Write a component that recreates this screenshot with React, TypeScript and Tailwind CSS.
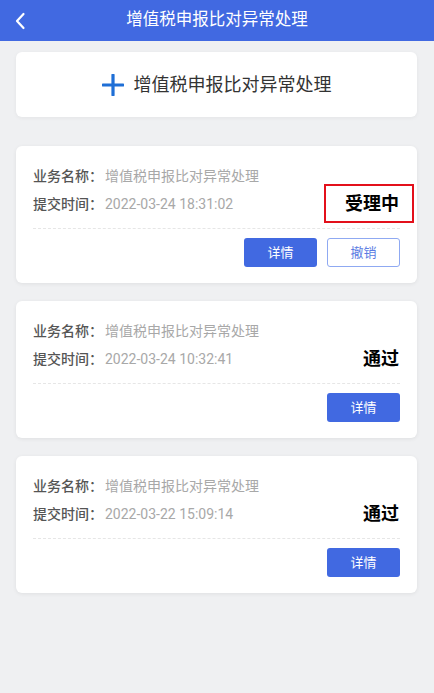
import React from "react";

type Item = { time: string; status: string; cancel?: boolean; marked?: boolean };

const items: Item[] = [
  { time: "2022-03-24 18:31:02", status: "受理中", cancel: true, marked: true },
  { time: "2022-03-24 10:32:41", status: "通过" },
  { time: "2022-03-22 15:09:14", status: "通过" },
];

function Card({ item }: { item: Item }) {
  return (
    <div className="relative ml-4 mr-[17px] rounded-[6px] bg-white px-[17px] pt-[16px] pb-[16px] shadow-[0_1px_4px_rgba(0,0,0,0.07)]">
      <div className="flex items-end justify-between">
        <div>
          <div className="flex h-[28px] items-center text-[14px]">
            <span className="w-[72px] font-medium text-[#555]">业务名称：</span>
            <span className="text-[#a8a8a8]">增值税申报比对异常处理</span>
          </div>
          <div className="flex h-[28px] items-center text-[14px]">
            <span className="w-[72px] font-medium text-[#555]">提交时间：</span>
            <span className="text-[#a8a8a8]">{item.time}</span>
          </div>
        </div>
        <div className="flex h-[30px] items-center pr-[1px] text-[18px] font-bold text-black">{item.status}</div>
      </div>
      {item.marked && (
        <div className="absolute left-[308px] top-[38px] h-[39px] w-[90px] border-2 border-[#e3101b]" />
      )}
      <div className="mt-[10px] border-t border-dashed border-[#e6e6e6]" />
      <div className="mt-[9px] flex justify-end gap-[10px]">
        <button className="h-[29px] w-[73px] rounded-[3px] bg-[#4169e1] text-[13px] text-white">详情</button>
        {item.cancel && (
          <button className="h-[29px] w-[73px] rounded-[3px] border border-[#8fa9f2] bg-white text-[13px] text-[#5b7ce3]">
            撤销
          </button>
        )}
      </div>
    </div>
  );
}

export default function App() {
  return (
    <div
      className="min-h-[693px] w-[434px] bg-[#eff0f2]"
      style={{ fontFamily: '"Roboto", "Noto Sans CJK SC", sans-serif' }}
    >
      <div className="relative flex h-[41px] items-center justify-center bg-[#4169e1]">
        <svg className="absolute left-[13px] top-[11px]" width="14" height="20" viewBox="0 0 14 20" fill="none">
          <path d="M10.5 3 L4 10 L10.5 17" stroke="white" strokeWidth="2.2" strokeLinecap="round" strokeLinejoin="round" />
        </svg>
        <span className="text-[16.5px] text-white">增值税申报比对异常处理</span>
      </div>
      <div className="ml-4 mr-[17px] mt-[11px] flex h-[65px] items-center justify-center rounded-[6px] bg-white shadow-[0_1px_4px_rgba(0,0,0,0.05)]">
        <svg width="22" height="22" viewBox="0 0 22 22" className="mr-[10px]">
          <path d="M11 1 V21 M1 11 H21" stroke="#1f6fd6" strokeWidth="3.2" strokeLinecap="round" />
        </svg>
        <span className="text-[18px] text-[#333]">增值税申报比对异常处理</span>
      </div>
      <div className="mt-[29px] flex flex-col gap-[18px] pb-6">
        {items.map((it, i) => (
          <Card key={i} item={it} />
        ))}
      </div>
    </div>
  );
}
